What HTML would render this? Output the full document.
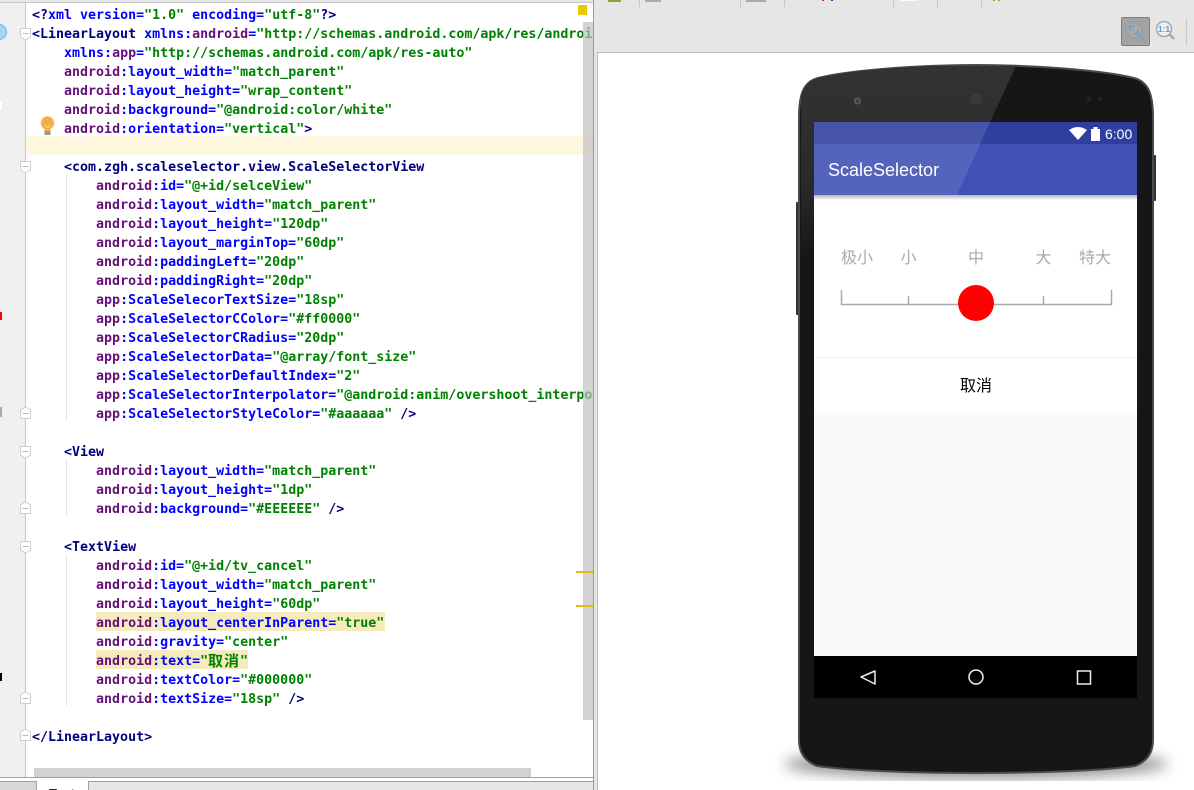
<!DOCTYPE html>
<html><head><meta charset="utf-8"><style>
html,body{margin:0;padding:0;background:#fff}
#root{position:relative;width:1194px;height:790px;overflow:hidden;background:#fff}
.a{position:absolute}
#ed{position:absolute;left:0;top:0;width:593px;height:777px;overflow:hidden;background:#fff}
.l{position:absolute;left:32px;margin-top:3px;height:19px;white-space:pre;font:bold 13.3px/19px "DejaVu Sans Mono","Liberation Mono","Noto Sans CJK SC",monospace;color:#000}
.t{color:#000080}.p{color:#660e7a}.n{color:#0000ff}.v{color:#008000}
.sep{position:absolute;top:0;width:1px;height:7px;background:#c4c4c4}
.lb{position:absolute;top:249px;font:16px/20px "Liberation Sans","Noto Sans CJK SC",sans-serif;color:#aaa;text-align:center;transform:translateX(-50%);white-space:nowrap}
</style></head><body><div id="root">
<div id="ed">
<div class="a" style="left:0;top:0;width:593px;height:3px;background:#e8e8e8;border-bottom:1px solid #c8c8c8;box-sizing:border-box"></div>
<div class="a" style="left:0;top:3px;width:25px;height:774px;background:#f0f0f0"></div>
<div class="a" style="left:25px;top:3px;width:1px;height:774px;background:#c8c8c8"></div>
<div class="a" style="left:26px;top:136px;width:567px;height:19px;background:#fff8e1"></div>
<div class="a" style="left:66px;top:175px;width:1px;height:246px;background:#e4e4e4"></div>
<div class="a" style="left:66px;top:459px;width:1px;height:57px;background:#e4e4e4"></div>
<div class="a" style="left:66px;top:554px;width:1px;height:152px;background:#e4e4e4"></div>
<div class="a" style="left:96px;top:612px;width:289px;height:19px;background:#f6ebbc"></div>
<div class="a" style="left:96px;top:650px;width:152px;height:19px;background:#f6ebbc"></div>
<div class="l" style="top:3px"><span class="t">&lt;?</span><span class="n">xml version=</span><span class="v">"1.0"</span> <span class="n">encoding=</span><span class="v">"utf-8"</span><span class="t">?&gt;</span></div>
<div class="l" style="top:22px"><span class="t">&lt;LinearLayout</span> <span class="n">xmlns:</span><span class="p">android</span><span class="n">=</span><span class="v">"http://schemas.android.com/apk/res/android"</span></div>
<div class="l" style="top:41px">    <span class="n">xmlns:</span><span class="p">app</span><span class="n">=</span><span class="v">"http://schemas.android.com/apk/res-auto"</span></div>
<div class="l" style="top:60px">    <span class="p">android</span><span class="n">:layout_width=</span><span class="v">"match_parent"</span></div>
<div class="l" style="top:79px">    <span class="p">android</span><span class="n">:layout_height=</span><span class="v">"wrap_content"</span></div>
<div class="l" style="top:98px">    <span class="p">android</span><span class="n">:background=</span><span class="v">"@android:color/white"</span></div>
<div class="l" style="top:117px">    <span class="p">android</span><span class="n">:orientation=</span><span class="v">"vertical"</span><span class="t">&gt;</span></div>
<div class="l" style="top:155px">    <span class="t">&lt;com.zgh.scaleselector.view.ScaleSelectorView</span></div>
<div class="l" style="top:174px">        <span class="p">android</span><span class="n">:id=</span><span class="v">"@+id/selceView"</span></div>
<div class="l" style="top:193px">        <span class="p">android</span><span class="n">:layout_width=</span><span class="v">"match_parent"</span></div>
<div class="l" style="top:212px">        <span class="p">android</span><span class="n">:layout_height=</span><span class="v">"120dp"</span></div>
<div class="l" style="top:231px">        <span class="p">android</span><span class="n">:layout_marginTop=</span><span class="v">"60dp"</span></div>
<div class="l" style="top:250px">        <span class="p">android</span><span class="n">:paddingLeft=</span><span class="v">"20dp"</span></div>
<div class="l" style="top:269px">        <span class="p">android</span><span class="n">:paddingRight=</span><span class="v">"20dp"</span></div>
<div class="l" style="top:288px">        <span class="p">app</span><span class="n">:ScaleSelecorTextSize=</span><span class="v">"18sp"</span></div>
<div class="l" style="top:307px">        <span class="p">app</span><span class="n">:ScaleSelectorCColor=</span><span class="v">"#ff0000"</span></div>
<div class="l" style="top:326px">        <span class="p">app</span><span class="n">:ScaleSelectorCRadius=</span><span class="v">"20dp"</span></div>
<div class="l" style="top:345px">        <span class="p">app</span><span class="n">:ScaleSelectorData=</span><span class="v">"@array/font_size"</span></div>
<div class="l" style="top:364px">        <span class="p">app</span><span class="n">:ScaleSelectorDefaultIndex=</span><span class="v">"2"</span></div>
<div class="l" style="top:383px">        <span class="p">app</span><span class="n">:ScaleSelectorInterpolator=</span><span class="v">"@android:anim/overshoot_interpolator"</span></div>
<div class="l" style="top:402px">        <span class="p">app</span><span class="n">:ScaleSelectorStyleColor=</span><span class="v">"#aaaaaa"</span> <span class="t">/&gt;</span></div>
<div class="l" style="top:440px">    <span class="t">&lt;View</span></div>
<div class="l" style="top:459px">        <span class="p">android</span><span class="n">:layout_width=</span><span class="v">"match_parent"</span></div>
<div class="l" style="top:478px">        <span class="p">android</span><span class="n">:layout_height=</span><span class="v">"1dp"</span></div>
<div class="l" style="top:497px">        <span class="p">android</span><span class="n">:background=</span><span class="v">"#EEEEEE"</span> <span class="t">/&gt;</span></div>
<div class="l" style="top:535px">    <span class="t">&lt;TextView</span></div>
<div class="l" style="top:554px">        <span class="p">android</span><span class="n">:id=</span><span class="v">"@+id/tv_cancel"</span></div>
<div class="l" style="top:573px">        <span class="p">android</span><span class="n">:layout_width=</span><span class="v">"match_parent"</span></div>
<div class="l" style="top:592px">        <span class="p">android</span><span class="n">:layout_height=</span><span class="v">"60dp"</span></div>
<div class="l" style="top:611px">        <span class="p">android</span><span class="n">:layout_centerInParent=</span><span class="v">"true"</span></div>
<div class="l" style="top:630px">        <span class="p">android</span><span class="n">:gravity=</span><span class="v">"center"</span></div>
<div class="l" style="top:649px">        <span class="p">android</span><span class="n">:text=</span><span class="v">"</span></div>
<div class="a v" style="left:208px;top:651px;width:34px;height:19px;font:bold 15px/19px 'WenQuanYi Zen Hei','Noto Sans CJK SC',sans-serif;letter-spacing:1px;white-space:nowrap">取消</div>
<div class="l v" style="left:240px;top:649px">"</div>
<div class="l" style="top:668px">        <span class="p">android</span><span class="n">:textColor=</span><span class="v">"#000000"</span></div>
<div class="l" style="top:687px">        <span class="p">android</span><span class="n">:textSize=</span><span class="v">"18sp"</span> <span class="t">/&gt;</span></div>
<div class="l" style="top:725px"><span class="t">&lt;/LinearLayout&gt;</span></div>
<svg class="a" style="left:0;top:0" width="40" height="777" viewBox="0 0 40 777" fill="#fff" stroke="#cfcfcf">
<g><path d="M20.500 28.500H30.500V37L25.500 40L20.500 37Z"/><path d="M22.500 33.500H28.500" stroke="#bbb"/></g>
<g transform="translate(0,133)"><path d="M20.500 28.500H30.500V37L25.500 40L20.500 37Z"/><path d="M22.500 33.500H28.500" stroke="#bbb"/></g>
<g transform="translate(0,418)"><path d="M20.500 28.500H30.500V37L25.500 40L20.500 37Z"/><path d="M22.500 33.500H28.500" stroke="#bbb"/></g>
<g transform="translate(0,513)"><path d="M20.500 28.500H30.500V37L25.500 40L20.500 37Z"/><path d="M22.500 33.500H28.500" stroke="#bbb"/></g>
<g transform="translate(0,380)"><path d="M20.500 38.500H30.500V30L25.500 27L20.500 30Z"/><path d="M22.500 33.500H28.500" stroke="#bbb"/></g>
<g transform="translate(0,475)"><path d="M20.500 38.500H30.500V30L25.500 27L20.500 30Z"/><path d="M22.500 33.500H28.500" stroke="#bbb"/></g>
<g transform="translate(0,665)"><path d="M20.500 38.500H30.500V30L25.500 27L20.500 30Z"/><path d="M22.500 33.500H28.500" stroke="#bbb"/></g>
<g transform="translate(0,702)"><path d="M20.500 38.500H30.500V30L25.500 27L20.500 30Z"/><path d="M22.500 33.500H28.500" stroke="#bbb"/></g>
</svg>
<div class="a" style="left:-9px;top:24px;width:16px;height:16px;border-radius:50%;background:#a8d4f2;border:1px solid #6fb2e4;box-sizing:border-box"></div>
<div class="a" style="left:0;top:102px;width:2px;height:8px;background:#fff"></div>
<div class="a" style="left:0;top:312px;width:2px;height:8px;background:#f00"></div>
<div class="a" style="left:0;top:407px;width:2px;height:10px;background:#aaa"></div>
<div class="a" style="left:0;top:673px;width:2px;height:8px;background:#000"></div>
<svg class="a" style="left:40px;top:116px" width="15" height="20" viewBox="0 0 15 20"><circle cx="7.500" cy="7" r="6.500" fill="#f2ad4b" stroke="#f9d28e"/><path d="M5 9L7.500 12L10 9" fill="none" stroke="#fad48f"/><rect x="4.500" y="12" width="6" height="3" fill="#f2ad4b"/><rect x="4.500" y="15" width="6" height="4" fill="#9a9a9a"/></svg>
<div class="a" style="left:583px;top:22px;width:10px;height:698px;background:rgba(190,190,190,.68)"></div>
<div class="a" style="left:34px;top:768px;width:497px;height:9px;background:#d2d2d2"></div>
<div class="a" style="left:578px;top:5px;width:9px;height:10px;background:#edc800"></div>
<div class="a" style="left:576px;top:571px;width:17px;height:2px;background:#e3bd10"></div>
<div class="a" style="left:576px;top:605px;width:17px;height:2px;background:#e3bd10"></div>
</div>
<div class="a" style="left:0;top:777px;width:593px;height:1px;background:#a0a0a0"></div>
<div class="a" style="left:0;top:778px;width:593px;height:12px;background:#fff"></div>
<div class="a" style="left:0;top:781px;width:37px;height:9px;background:#d8d8d8;border-top:1px solid #a0a0a0;border-right:1px solid #a0a0a0;box-sizing:border-box"></div>
<div class="a" style="left:88px;top:781px;width:505px;height:9px;background:#e6e6e6;border-top:1px solid #a0a0a0;border-left:1px solid #a0a0a0;box-sizing:border-box"></div>
<div class="a" style="left:49px;top:788px;width:30px;height:2px;overflow:hidden;font:bold 13px/13px 'Liberation Sans',sans-serif;color:#222"><span style="position:relative;top:-1px">Text</span></div>
<div class="a" style="left:593px;top:0;width:1px;height:790px;background:#9a9a9a"></div>
<div class="a" style="left:594px;top:0;width:3px;height:790px;background:#e6e6e6"></div>
<div class="a" style="left:597px;top:0;width:597px;height:52px;background:#e6e6e6"></div>
<div class="a" style="left:597px;top:52px;width:597px;height:1px;background:#bdbdbd"></div>
<div class="a" style="left:597px;top:52px;width:1px;height:738px;background:#bdbdbd"></div>
<div class="sep" style="left:639px"></div><div class="sep" style="left:740px"></div><div class="sep" style="left:784px"></div><div class="sep" style="left:893px"></div><div class="sep" style="left:937px"></div><div class="sep" style="left:981px"></div>
<div class="a" style="left:608px;top:0;width:13px;height:2px;background:#8aa82c"></div>
<div class="a" style="left:645px;top:0;width:16px;height:2px;background:#aaa"></div>
<div class="a" style="left:746px;top:0;width:20px;height:2px;background:#aaa"></div>
<div class="a" style="left:822px;top:0;width:2px;height:1px;background:#c33"></div>
<div class="a" style="left:831px;top:0;width:2px;height:1px;background:#33a"></div>
<div class="a" style="left:900px;top:0;width:18px;height:1px;background:#fafafa"></div>
<div class="a" style="left:993px;top:0;width:2px;height:1px;background:#9aa82c"></div>
<div class="a" style="left:998px;top:0;width:2px;height:1px;background:#9aa82c"></div>
<div class="a" style="left:1121px;top:17px;width:29px;height:29px;background:#a3a3a3;border:1px solid #7d7d7d;box-sizing:border-box;border-radius:2px"></div>
<svg class="a" style="left:1121px;top:17px" width="75" height="30" viewBox="0 0 75 30"><circle cx="13" cy="13" r="8" fill="#a8a8a8" stroke="#9c9c9c" stroke-width="1.500"/><path d="M9 13V9H13M17 13V17H13" fill="none" stroke="#62a6dc" stroke-width="2"/><line x1="19" y1="19" x2="25" y2="25" stroke="#999" stroke-width="2"/><circle cx="43" cy="12" r="7.500" fill="#edf1f4" stroke="#a8a8a8" stroke-width="1.500"/><line x1="48.500" y1="17.500" x2="53" y2="22" stroke="#a8a8a8" stroke-width="2.500"/><text x="43" y="15" text-anchor="middle" font-family="Liberation Sans,sans-serif" font-weight="bold" font-size="8.500" fill="#5b9bd0">1:1</text><line x1="65.500" y1="1" x2="65.500" y2="29" stroke="#c8c8c8"/></svg>
<svg class="a" style="left:770px;top:55px" width="420" height="735" viewBox="770 55 420 735">
<defs>
<linearGradient id="sh" x1="0" y1="0" x2="0" y2="1"><stop offset="0" stop-color="#000" stop-opacity=".3"/><stop offset="1" stop-color="#000" stop-opacity="0"/></linearGradient>
<linearGradient id="gl" x1="0" y1="65" x2="0" y2="260" gradientUnits="userSpaceOnUse"><stop offset="0" stop-color="#333"/><stop offset=".6" stop-color="#2a2a2a"/><stop offset="1" stop-color="#161616"/></linearGradient>
<filter id="bl" x="-10%" y="-80%" width="120%" height="260%"><feGaussianBlur stdDeviation="7"/></filter>
<clipPath id="bc"><path d="M799 118C799 95 803 82 818 78C850 70 920 65 976 65C1032 65 1102 70 1134 78C1149 82 1153 95 1153 118L1153 740C1153 752 1148 761 1135 766C1100 771 1030 773 976 773C922 773 852 771 817 766C804 761 799 752 799 740Z"/></clipPath>
<clipPath id="sc"><rect x="770" y="55" width="420" height="726"/></clipPath>
</defs>
<g clip-path="url(#sc)"><ellipse cx="976" cy="764" rx="192" ry="15" fill="#000" opacity=".42" filter="url(#bl)"/></g>
<rect x="796" y="202" width="4" height="113" rx="1" fill="#333"/>
<rect x="1152" y="155" width="4" height="46" rx="1" fill="#333"/>
<path d="M799 118C799 95 803 82 818 78C850 70 920 65 976 65C1032 65 1102 70 1134 78C1149 82 1153 95 1153 118L1153 740C1153 752 1148 761 1135 766C1100 771 1030 773 976 773C922 773 852 771 817 766C804 761 799 752 799 740Z" fill="#161616" stroke="#4a4a4a" stroke-width="2"/>
<g clip-path="url(#bc)"><path d="M801 66L1016 66L990 122L814 122L814 260L801 260Z" fill="url(#gl)"/></g>
<circle cx="857.500" cy="101" r="3.500" fill="#5a5a5a"/><circle cx="857.500" cy="101" r="1.600" fill="#336"/>
<circle cx="976" cy="99" r="8" fill="#333"/><circle cx="976" cy="99" r="6" fill="#3e3e3e" stroke="#262626" stroke-dasharray="1 1"/><circle cx="976" cy="99" r="3" fill="#3e3e3e" stroke="#262626" stroke-dasharray="1 1"/>
<circle cx="1089" cy="99" r="2.500" fill="#222"/><circle cx="1100" cy="99" r="2" fill="#222"/>
<rect x="814" y="122" width="323" height="22" fill="#303f9f"/>
<rect x="814" y="144" width="323" height="51" fill="#3f51b5"/>
<path d="M814 122L990 122L957 195L814 195Z" fill="#fff" fill-opacity=".11"/>
<rect x="814" y="195" width="323" height="217" fill="#fff"/>
<rect x="814" y="195" width="323" height="5" fill="url(#sh)"/>
<rect x="814" y="357" width="323" height="1" fill="#eee"/>
<rect x="814" y="412" width="323" height="244" fill="#fafafa"/>
<rect x="814" y="656" width="323" height="42" fill="#000"/>
<path d="M1069 130Q1078 124 1087 130L1078 140Z" fill="#fff"/>
<path d="M1091 129H1093.500V127H1097.500V129H1100V141H1091Z" fill="#fff"/>
<path d="M841.500 290V304.500H1111.500V290M908.500 296V304.500M1043.500 296V304.500" fill="none" stroke="#aaa" stroke-width="1.500"/>
<circle cx="976" cy="303" r="18" fill="#f00"/>
<path d="M875 671L861 677L875 684Z" fill="none" stroke="#eee" stroke-width="1.500" stroke-linejoin="round"/>
<circle cx="976" cy="677" r="7" fill="none" stroke="#eee" stroke-width="1.500"/>
<rect x="1077.500" y="671" width="13" height="13" fill="none" stroke="#eee" stroke-width="1.500"/>
</svg>
<div class="a" style="left:1105px;top:125px;font:14px/18px 'Liberation Sans',sans-serif;color:#fff">6:00</div>
<div class="a" style="left:828px;top:159px;font:18px/22px 'Liberation Sans',sans-serif;color:#fff">ScaleSelector</div>
<div class="lb" style="left:857px">极小</div><div class="lb" style="left:908.500px">小</div><div class="lb" style="left:976px">中</div><div class="lb" style="left:1043.500px">大</div><div class="lb" style="left:1095px">特大</div>
<div class="lb" style="left:976px;top:377px;color:#000">取消</div>
</div></body></html>
